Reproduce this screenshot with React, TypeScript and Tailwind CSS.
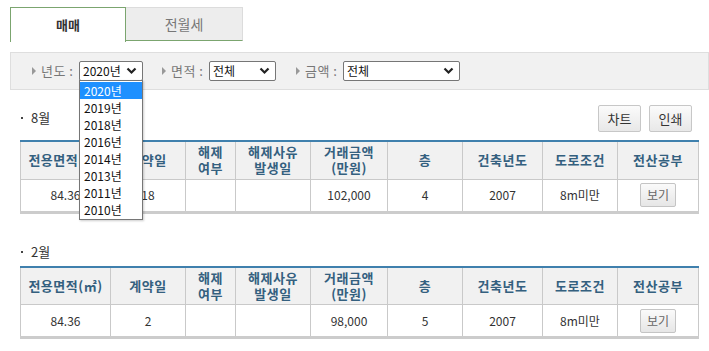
import React from 'react';

const font = { fontFamily: '"Noto Sans CJK KR", "Noto Sans", sans-serif' };

const Chevron = () => (
  <svg width="11" height="8" viewBox="0 0 11 8" className="shrink-0">
    <path d="M1.5 1.5 L5.5 5.5 L9.5 1.5" fill="none" stroke="#222" strokeWidth="2.2" />
  </svg>
);

const Tri = () => (
  <span className="inline-block w-0 h-0 border-y-[4px] border-y-transparent border-l-[4px] border-l-[#999] mr-[5px]" />
);

const Select = ({ value, w }: { value: string; w: string }) => (
  <div className={`${w} h-[20px] border border-[#767676] rounded-[2px] bg-white flex items-center justify-between pl-[3px] pr-[5px] text-[12px] text-[#111]`}>
    <span>{value}</span>
    <Chevron />
  </div>
);

const years = ['2020년', '2019년', '2018년', '2016년', '2014년', '2013년', '2011년', '2010년'];

interface Row {
  area: string;
  day: string;
  price: string;
  floor: string;
  built: string;
  road: string;
}

const widths = ['w-[90px]', 'w-[75px]', 'w-[50px]', 'w-[75px]', 'w-[77px]', 'w-[75px]', 'w-[80px]', 'w-[75px]', 'w-[81px]'];

const DealTable = ({ row }: { row: Row }) => {
  const heads: React.ReactNode[] = [
    '전용면적(㎡)',
    '계약일',
    <>해제<br />여부</>,
    <>해제사유<br />발생일</>,
    <>거래금액<br />(만원)</>,
    '층',
    '건축년도',
    '도로조건',
    '전산공부',
  ];
  return (
    <table className="w-[678px] table-fixed border-collapse border-t-2 border-t-[#3f80ad] border-b-[3px] border-b-[#cccccc]">
      <colgroup>
        {widths.map((w, i) => (
          <col key={i} className={w} />
        ))}
      </colgroup>
      <thead>
        <tr className="h-[38px] bg-[#f1f1f1]">
          {heads.map((h, i) => (
            <th key={i} className="border-x border-b border-[#c9c9c9] text-[13px] leading-[16px] font-bold text-[#34607f] tracking-[0.5px]">
              {h}
            </th>
          ))}
        </tr>
      </thead>
      <tbody>
        <tr className="h-[33px] text-[12px] text-[#333] text-center">
          <td className="border-x border-[#c9c9c9]">{row.area}</td>
          <td className="border-x border-[#c9c9c9]">{row.day}</td>
          <td className="border-x border-[#c9c9c9]"></td>
          <td className="border-x border-[#c9c9c9]"></td>
          <td className="border-x border-[#c9c9c9]">{row.price}</td>
          <td className="border-x border-[#c9c9c9]">{row.floor}</td>
          <td className="border-x border-[#c9c9c9]">{row.built}</td>
          <td className="border-x border-[#c9c9c9]">{row.road}</td>
          <td className="border-x border-[#c9c9c9]">
            <div className="mx-auto w-[36px] h-[24px] border border-[#c4c4c4] rounded-[2px] bg-gradient-to-b from-[#fafafa] to-[#e6e6e6] flex items-center justify-center text-[12px] text-[#666]">
              보기
            </div>
          </td>
        </tr>
      </tbody>
    </table>
  );
};

const Btn = ({ label }: { label: string }) => (
  <div className="w-[43px] h-[27px] border border-[#c7c7c7] rounded-[2px] bg-gradient-to-b from-[#fbfbfb] to-[#e8e8e8] flex items-center justify-center text-[13px] text-[#333]">
    {label}
  </div>
);

const Filter = ({ label, value, w, ml }: { label: string; value: string; w: string; ml: string }) => (
  <div className={`flex items-center ${ml}`}>
    <Tri />
    <span className="w-[38px] tracking-[0.5px]">{label}</span>
    <Select value={value} w={w} />
  </div>
);

const Heading = ({ text }: { text: string }) => (
  <div className="flex items-center text-[13px] text-[#333] h-[20px]">
    <span className="w-[2px] h-[2px] bg-[#444] ml-[1px] mr-[8px]" />
    <span>{text}</span>
  </div>
);

export default function App() {
  return (
    <div className="w-[709px] h-[351px] bg-white overflow-hidden pt-[7px] pl-[10px] relative" style={font}>
      <div className="flex h-[35px]">
        <div className="w-[116px] h-[35px] border-l border-t border-r border-[#7ba56f] bg-white flex items-center justify-center text-[13px] font-bold text-[#333]">
          매매
        </div>
        <div className="w-[117px] h-[34px] border-t border-r border-t-[#dcdcdc] border-r-[#dcdcdc] border-b border-b-[#7ba56f] bg-[#ededed] flex items-center justify-center text-[14px] text-[#777]">
          전월세
        </div>
      </div>

      <div className="mt-[10px] w-[699px] h-[38px] border border-[#dedede] bg-[#f1f1f1] flex items-center text-[13px] text-[#777]">
        <Filter label="년도 :" value="2020년" w="w-[64px]" ml="ml-[21px]" />
        <Filter label="면적 :" value="전체" w="w-[67px]" ml="ml-[19px]" />
        <Filter label="금액 :" value="전체" w="w-[117px]" ml="ml-[20px]" />
      </div>

      <div className="ml-[10px] w-[678px]">
        <div className="mt-[15px] flex items-start justify-between h-[27px] pr-[6px]">
          <div className="pt-[3px]">
            <Heading text="8월" />
          </div>
          <div className="flex gap-[8px]">
            <Btn label="차트" />
            <Btn label="인쇄" />
          </div>
        </div>
        <div className="mt-[8px]">
          <DealTable row={{ area: '84.36', day: '18', price: '102,000', floor: '4', built: '2007', road: '8m미만' }} />
        </div>

        <div className="mt-[28px]">
          <Heading text="2월" />
        </div>
        <div className="mt-[4px]">
          <DealTable row={{ area: '84.36', day: '2', price: '98,000', floor: '5', built: '2007', road: '8m미만' }} />
        </div>
      </div>

      <div className="absolute left-[79px] top-[80px] w-[64px] border border-[#767676] bg-white py-[1px] shadow-[1px_1px_2px_rgba(0,0,0,0.2)]">
        {years.map((y, i) => (
          <div
            key={y}
            className={`h-[17px] leading-[17px] pl-[4px] text-[12px] ${i === 0 ? 'bg-[#1e90ff] text-white' : 'text-[#111]'}`}
          >
            {y}
          </div>
        ))}
      </div>
    </div>
  );
}
